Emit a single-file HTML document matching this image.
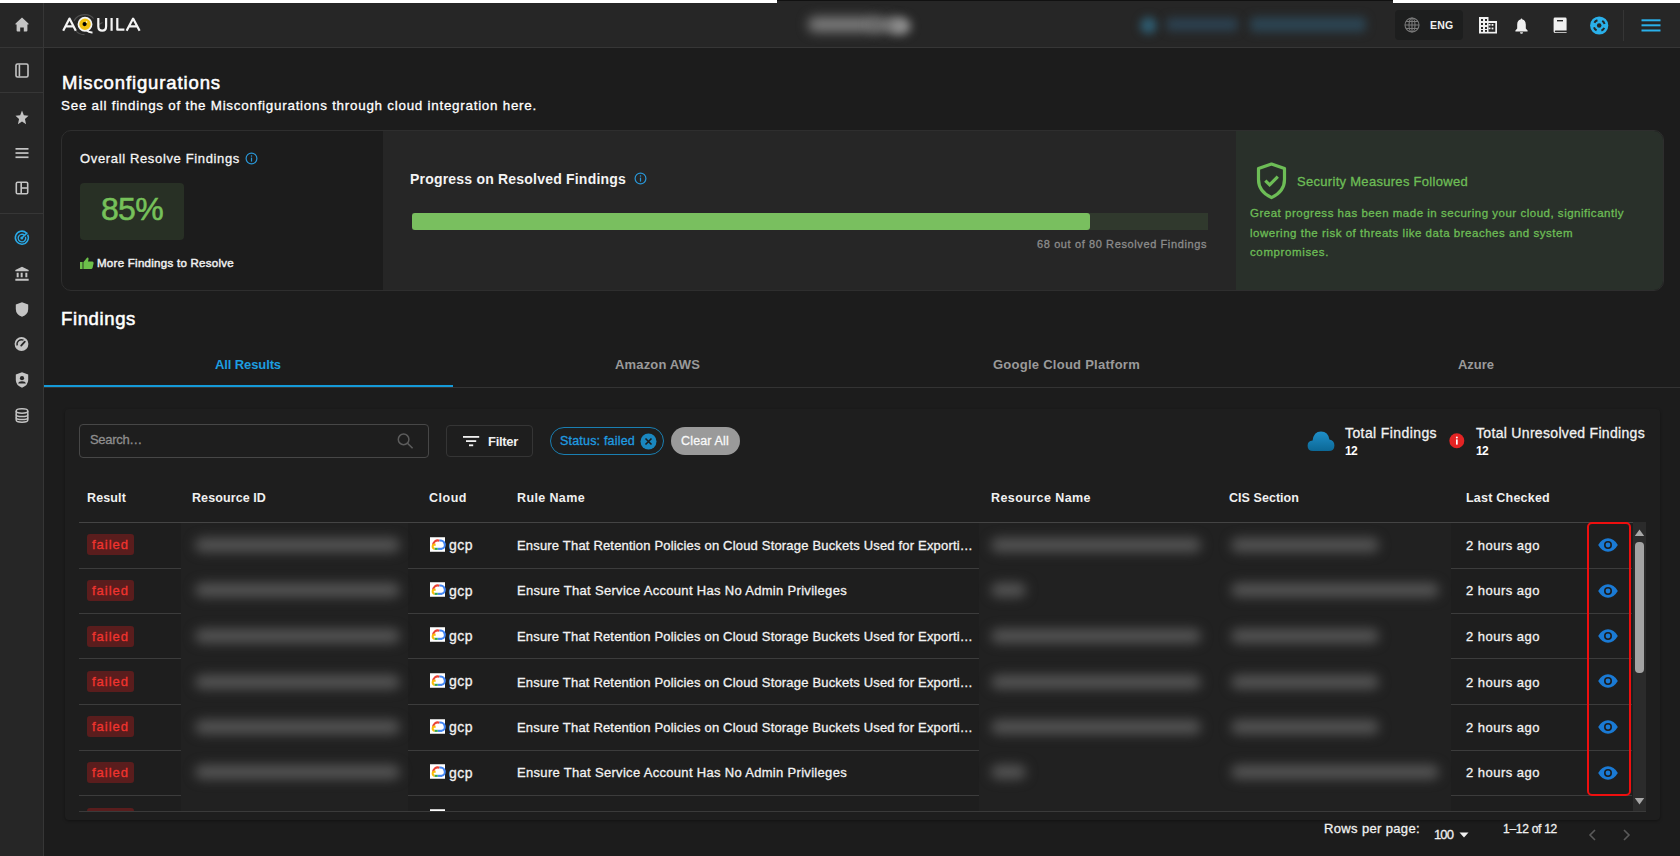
<!DOCTYPE html>
<html><head><meta charset="utf-8">
<style>
*{box-sizing:border-box;margin:0;padding:0}
html,body{width:1680px;height:856px;overflow:hidden;background:#1c1c1c;font-family:"Liberation Sans",sans-serif;color:#fff}
.a{position:absolute;white-space:nowrap;line-height:1;-webkit-text-stroke:0.3px currentColor}
.badge span{-webkit-text-stroke:0.3px currentColor}
.nb{-webkit-text-stroke:0 !important}
.a.b,.th{-webkit-text-stroke:0}
svg{position:absolute;display:block;overflow:visible}
.bx{position:absolute}
.sdiv{position:absolute;left:0;width:43px;height:1px;background:#363636}
.si{fill:#c4c4c4}
.th{font-size:12.5px;font-weight:700;color:#f0f0f0}
.td{font-size:13px;color:#f2f2f2}
.badge{position:absolute;left:87px;width:47px;height:21px;background:#5a1d1d;border-radius:3px}
.badge span{position:absolute;left:5px;top:4px;font-size:13px;color:#f0342f;white-space:nowrap;line-height:1}
.rl{position:absolute;height:1px;background:#3c3c3c}
.blur{position:absolute;background:#555;filter:blur(6px);border-radius:7px}
</style></head><body>
<!-- top strip -->
<div class="bx" style="left:0;top:0;width:777px;height:3px;background:#fff;z-index:5"></div>
<div class="bx" style="left:777px;top:0;width:616px;height:1px;background:#111;z-index:5"></div>
<div class="bx" style="left:1393px;top:0;width:287px;height:3px;background:#fff;z-index:5"></div>

<!-- sidebar -->
<div class="bx" style="left:0;top:3px;width:43px;height:853px;background:#262626"></div>
<div class="bx" style="left:43px;top:3px;width:1px;height:853px;background:#363636"></div>
<!-- topbar -->
<div class="bx" style="left:44px;top:0;width:1636px;height:47px;background:#262626"></div>
<div class="bx" style="left:0;top:47px;width:1680px;height:1px;background:#363636"></div>
<div class="sdiv" style="top:92px"></div>
<div class="sdiv" style="top:213px"></div>

<!-- sidebar icons -->
<svg style="left:15px;top:17px" width="14" height="15" viewBox="0 0 14 15"><path class="si" d="M7 0.5L0.8 6.2Q0 7 0.5 7.6L1.6 7.6L1.6 13.6Q1.6 14.6 2.6 14.6L5.2 14.6L5.2 10.4L8.8 10.4L8.8 14.6L11.4 14.6Q12.4 14.6 12.4 13.6L12.4 7.6L13.5 7.6Q14 7 13.2 6.2Z"></path></svg>
<svg style="left:15px;top:63px" width="14" height="15" viewBox="0 0 14 15"><rect x="1" y="1" width="12" height="13" rx="1.5" fill="none" stroke="#c4c4c4" stroke-width="1.6"></rect><rect x="3.6" y="1.5" width="1.6" height="12" fill="#c4c4c4"></rect></svg>
<svg style="left:14px;top:110px" width="16" height="15" viewBox="0 0 24 23"><path class="si" d="M12 18.27L18.18 22l-1.64-7.03L22 10.24l-7.19-.61L12 3 9.19 9.63 2 10.24l5.46 4.73L5.82 22z" transform="translate(0,-2.5) scale(1,1.1)"></path></svg>
<svg style="left:15px;top:147px" width="14" height="12" viewBox="0 0 14 12"><rect x="0.5" y="1" width="13" height="1.7" class="si"></rect><rect x="0.5" y="5.2" width="13" height="1.7" class="si"></rect><rect x="0.5" y="9.4" width="13" height="1.7" class="si"></rect></svg>
<svg style="left:15px;top:181px" width="14" height="14" viewBox="0 0 14 14"><rect x="1.3" y="1.3" width="11.4" height="11.4" rx="1.3" fill="none" stroke="#c4c4c4" stroke-width="1.6"></rect><rect x="5.4" y="1.5" width="1.6" height="11" fill="#c4c4c4"></rect><rect x="6.5" y="6.2" width="6" height="1.6" fill="#c4c4c4"></rect></svg>
<!-- radar (active) -->
<svg style="left:14px;top:230px" width="16" height="16" viewBox="0 0 16 16"><g fill="none" stroke="#2aa9e6"><path d="M12.6 3.2A6.5 6.5 0 1 0 13.6 4.6" stroke-width="1.5"></path><path d="M10.6 5.4A3.8 3.8 0 1 0 11.5 6.8" stroke-width="1.4"></path><path d="M7.8 8L13.4 2.6" stroke-width="1.5"></path></g><circle cx="7.8" cy="8" r="1.5" fill="#2aa9e6"></circle></svg>
<!-- bank -->
<svg style="left:14px;top:266px" width="16" height="16" viewBox="0 0 24 24"><path class="si" d="M4 10v7h3v-7H4zm6 0v7h3v-7h-3zM2 22h20v-3H2v3zm15-12v7h3v-7h-3zM12 1L2 6v2h20V6L12 1z"></path></svg>
<!-- shield -->
<svg style="left:15px;top:302px" width="14" height="15" viewBox="0 0 14 15"><path class="si" d="M7 0.3L0.8 2.6L0.8 7Q0.8 12.4 7 14.8Q13.2 12.4 13.2 7L13.2 2.6Z"></path></svg>
<!-- gauge -->
<svg style="left:14px;top:337px" width="15" height="14" viewBox="0 0 15 14"><circle cx="7.5" cy="7" r="6.9" class="si"></circle><path d="M3.2 8.5A4.5 4.5 0 0 1 9.5 3.2" fill="none" stroke="#262626" stroke-width="1.4"></path><path d="M7.2 8.6L10.8 4.6" stroke="#262626" stroke-width="1.8" stroke-linecap="round"></path></svg>
<!-- shield person -->
<svg style="left:15px;top:372px" width="14" height="16" viewBox="0 0 14 16"><path class="si" d="M7 0.3L0.8 2.4L0.8 8Q0.8 13.3 7 15.8Q13.2 13.3 13.2 8L13.2 2.4Z"></path><circle cx="7" cy="6.2" r="2.1" fill="#262626"></circle><path d="M3.2 11.6Q3.6 9.3 7 9.3Q10.4 9.3 10.8 11.6Z" fill="#262626"></path></svg>
<!-- database -->
<svg style="left:15px;top:408px" width="14" height="15" viewBox="0 0 14 15"><g fill="none" stroke="#c4c4c4" stroke-width="1.5"><ellipse cx="7" cy="3" rx="5.8" ry="2.2"></ellipse><path d="M1.2 3V12Q1.2 14.2 7 14.2Q12.8 14.2 12.8 12V3"></path><path d="M1.2 6.4Q1.2 8.6 7 8.6Q12.8 8.6 12.8 6.4"></path><path d="M1.2 9.4Q1.2 11.6 7 11.6Q12.8 11.6 12.8 9.4"></path></g></svg>

<!-- logo -->
<svg style="left:0;top:0" width="160" height="48" viewBox="0 0 160 48">
  <g fill="none" stroke="#5a5a5a" stroke-width="1.1" opacity="0.8">
    <path d="M74 21Q77 14.5 85 14.6Q91 14.8 93.5 18.5"></path>
    <path d="M75.5 30.2Q78.5 34.6 84.5 34.6"></path>
    <path d="M98.5 24.8L102.5 22.6"></path>
  </g>
  <g fill="none" stroke="#f4f4f4" stroke-width="2.2" stroke-linejoin="round">
    <path d="M63.2 30.8L69.5 18.6L75.8 30.8M65.6 26.4H73.4"></path>
    <path d="M98.3 18V26.2Q98.3 30.6 102.2 30.6Q106.1 30.6 106.1 26.2V18"></path>
    <path d="M111.6 18V30.8"></path>
    <path d="M117.3 18V29.7H124.4"></path>
    <path d="M126.6 30.8L133.1 18.6L139.6 30.8M129 26.4H137.2"></path>
  </g>
  <circle cx="85" cy="24.2" r="6.6" fill="#f2c10f" stroke="#f4f4f4" stroke-width="1.7"></circle>
  <circle cx="84.6" cy="24.1" r="2.1" fill="#000"></circle>
  <circle cx="86.6" cy="22" r="0.8" fill="#fff"></circle>
  <path d="M86.5 30.2Q89 32.6 92.5 32.4" fill="none" stroke="#f4f4f4" stroke-width="2"></path>
</svg>
<!-- blurred top center -->
<div class="bx" style="left:808px;top:17px;width:70px;height:15px;background:#7c7c7c;filter:blur(6px);border-radius:7px"></div>
<div class="bx" style="left:870px;top:18px;width:28px;height:14px;background:#7a7a7a;filter:blur(6px);border-radius:7px"></div>
<div class="bx" style="left:889px;top:17px;width:22px;height:18px;background:#8e8e8e;filter:blur(5px);border-radius:50%"></div>
<!-- blurred blue -->
<div class="bx" style="left:1140px;top:17px;width:17px;height:17px;background:#2e5a6e;filter:blur(4px);border-radius:50%"></div>
<div class="bx" style="left:1166px;top:18px;width:72px;height:13px;background:#2c4150;filter:blur(5px);border-radius:5px"></div>
<div class="bx" style="left:1250px;top:17px;width:116px;height:15px;background:#2c4452;filter:blur(5px);border-radius:5px"></div>

<!-- ENG -->
<div class="bx" style="left:1395px;top:10px;width:68px;height:30px;background:#1d1e1e;border-radius:4px"></div>
<svg style="left:1404px;top:17px" width="16" height="16" viewBox="0 0 16 16"><g fill="none" stroke="#7a7a7a" stroke-width="1.1"><circle cx="8" cy="8" r="7"></circle><ellipse cx="8" cy="8" rx="3" ry="7"></ellipse><path d="M1 8H15M2 4.5H14M2 11.5H14M8 1V15"></path></g></svg>
<div class="a b" style="left:1430px;top:20px;font-size:10.5px;font-weight:700;color:#f0f0f0;letter-spacing:0.2px">ENG</div>
<!-- building -->
<svg style="left:1479px;top:17px" width="19" height="17" viewBox="0 0 19 17"><path fill="#f0f0f0" d="M0 0H9.5V4H18V16.4H0Z"></path><g fill="#262626"><rect x="2" y="2" width="2" height="2"></rect><rect x="6" y="2" width="2" height="2"></rect><rect x="2" y="6" width="2" height="2"></rect><rect x="6" y="6" width="2" height="2"></rect><rect x="2" y="10" width="2" height="2"></rect><rect x="6" y="10" width="2" height="2"></rect><rect x="2" y="13" width="2" height="1.8"></rect><rect x="6" y="13" width="2" height="1.8"></rect><rect x="9.5" y="6" width="6.8" height="8.8"></rect></g><g fill="#f0f0f0"><rect x="9.5" y="7" width="2" height="1.6"></rect><rect x="9.5" y="10.6" width="2" height="1.6"></rect><rect x="12.6" y="7" width="1.8" height="1.8"></rect><rect x="12.6" y="10.6" width="1.8" height="1.8"></rect></g></svg>
<!-- bell -->
<svg style="left:1515px;top:18px" width="13" height="16" viewBox="0 0 13 16"><path fill="#f0f0f0" d="M6.5 0.5Q7.3 0.5 7.4 1.6Q10.8 2.4 10.8 6.6V10.6L12.6 12.6V13.4H0.4V12.6L2.2 10.6V6.6Q2.2 2.4 5.6 1.6Q5.7 0.5 6.5 0.5ZM5 14.2H8Q8 15.8 6.5 15.8Q5 15.8 5 14.2Z"></path></svg>
<!-- book -->
<svg style="left:1553px;top:17px" width="15" height="16" viewBox="0 0 15 16"><path fill="#f0f0f0" d="M2 0.6H12.2Q13.6 0.6 13.6 2V13.6H2.6Q1.8 13.6 1.8 14.4Q1.8 15.2 2.6 15.2H13.6V16H2Q0.6 16 0.6 14.6V2Q0.6 0.6 2 0.6Z"></path><rect x="4" y="3" width="6" height="1.4" fill="#262626"></rect></svg>
<!-- life ring -->
<svg style="left:1590px;top:16px" width="19" height="19" viewBox="0 0 19 19"><circle cx="9.2" cy="9.5" r="9.1" fill="#2ab0ea"></circle><circle cx="9.2" cy="9.5" r="5.6" fill="none" stroke="#262626" stroke-width="2" stroke-dasharray="3.8 5" stroke-dashoffset="-2.5"></circle><circle cx="9.2" cy="9.5" r="2.3" fill="#262626"></circle></svg>
<div class="bx" style="left:1623px;top:10px;width:1px;height:31px;background:#353535"></div>
<!-- hamburger -->
<svg style="left:1641px;top:19px" width="20" height="13" viewBox="0 0 20 13"><g fill="#2ab0ea"><rect x="0.5" y="0.3" width="19" height="2"></rect><rect x="0.5" y="5.3" width="19" height="2"></rect><rect x="0.5" y="10.5" width="19" height="2"></rect></g></svg>

<!-- page title -->
<div class="a" style="left: 62px; top: 74px; font-size: 18.5px; font-weight: 400; -webkit-text-stroke: 0.55px rgb(255, 255, 255); color: rgb(255, 255, 255); letter-spacing: 0.885px;">Misconfigurations</div>
<div class="a" style="left: 61px; top: 99px; font-size: 13.4px; color: rgb(255, 255, 255); letter-spacing: 0.749px;">See all findings of the Misconfigurations through cloud integration here.</div>

<!-- cards container -->
<div class="bx" style="left:61px;top:130px;width:1603px;height:161px;border:1px solid #2e2e2e;border-radius:10px;overflow:hidden;background:#1c1c1c">
  <div class="bx" style="left:321px;top:0;width:855px;height:161px;background:#262626"></div>
  <div class="bx" style="left:1174px;top:0;width:429px;height:161px;background:#29302a"></div>
</div>

<!-- card 1 -->
<div class="a" style="left: 80px; top: 152px; font-size: 13px; color: rgb(244, 244, 244); letter-spacing: 0.646px;">Overall Resolve Findings</div>
<svg style="left:245px;top:152px" width="13" height="13" viewBox="0 0 13 13"><circle cx="6.5" cy="6.5" r="5.4" fill="none" stroke="#2996d6" stroke-width="1.2"></circle><rect x="5.9" y="5.6" width="1.2" height="4" fill="#2996d6"></rect><circle cx="6.5" cy="3.9" r="0.75" fill="#2996d6"></circle></svg>
<div class="bx" style="left:80px;top:183px;width:104px;height:57px;background:#283025;border-radius:4px"></div>
<div class="a" style="left: 101px; top: 193px; font-size: 32px; color: rgb(118, 193, 90); -webkit-text-stroke: 0.55px rgb(118, 193, 90); letter-spacing: -0.688px;">85%</div>
<svg style="left:80px;top:257px" width="14" height="12" viewBox="0 0 14 12"><path fill="#6cc04a" d="M0 5H2.6V12H0ZM3.4 5.2L6.6 1.2Q7.2 0.2 8 0.6Q8.8 1 8.5 2.4L8 4.6H12.4Q13.8 4.8 13.6 6.2L12.6 10.8Q12.3 12 11 12H3.4Z"></path></svg>
<div class="a" style="left: 97px; top: 257.5px; font-size: 11.5px; color: rgb(240, 240, 240); -webkit-text-stroke: 0.45px rgb(240, 240, 240); letter-spacing: 0.275px;">More Findings to Resolve</div>

<!-- card 2 -->
<div class="a b" style="left: 410px; top: 172px; font-size: 14px; font-weight: 700; color: rgb(244, 244, 244); letter-spacing: 0.205px;">Progress on Resolved Findings</div>
<svg style="left:634px;top:172px" width="13" height="13" viewBox="0 0 13 13"><circle cx="6.5" cy="6.5" r="5.4" fill="none" stroke="#2996d6" stroke-width="1.2"></circle><rect x="5.9" y="5.6" width="1.2" height="4" fill="#2996d6"></rect><circle cx="6.5" cy="3.9" r="0.75" fill="#2996d6"></circle></svg>
<div class="bx" style="left:412px;top:213px;width:796px;height:17px;background:#30392d"></div>
<div class="bx" style="left:412px;top:213px;width:678px;height:17px;background:#79bf5f;border-radius:3px"></div>
<div class="a" style="left: 1037px; top: 239px; font-size: 11px; color: rgb(140, 140, 140); letter-spacing: 0.612px;">68 out of 80 Resolved Findings</div>

<!-- card 3 -->
<svg style="left:1256px;top:162px" width="31" height="38" viewBox="0 0 31 38"><path d="M15.5 2L2.5 6.6V17.5Q2.5 29.6 15.5 35.6Q28.5 29.6 28.5 17.5V6.6Z" fill="none" stroke="#6dbd56" stroke-width="3.2" stroke-linejoin="round"></path><path d="M9.3 18.6L13.6 22.8L21.8 14.6" fill="none" stroke="#6dbd56" stroke-width="3.2"></path></svg>
<div class="a" style="left: 1297px; top: 175px; font-size: 13px; color: rgb(109, 189, 86); letter-spacing: 0.297px;">Security Measures Followed</div>
<div class="a" style="left: 1250px; top: 208px; font-size: 11.5px; color: rgb(109, 189, 86); letter-spacing: 0.514px;">Great progress has been made in securing your cloud, significantly</div>
<div class="a" style="left: 1250px; top: 227.5px; font-size: 11.5px; color: rgb(109, 189, 86); letter-spacing: 0.522px;">lowering the risk of threats like data breaches and system</div>
<div class="a" style="left: 1250px; top: 247px; font-size: 11.5px; color: rgb(109, 189, 86); letter-spacing: 0.618px;">compromises.</div>

<!-- Findings -->
<div class="a" style="left: 61px; top: 310px; font-size: 18.5px; font-weight: 400; -webkit-text-stroke: 0.55px rgb(255, 255, 255); color: rgb(255, 255, 255); letter-spacing: 0.633px;">Findings</div>

<!-- tabs -->
<div class="bx" style="left:44px;top:387px;width:1636px;height:1px;background:#333"></div>
<div class="bx" style="left:44px;top:385px;width:409px;height:2px;background:#159ad8"></div>
<div class="a b" style="left: 215px; top: 358px; font-size: 13px; font-weight: 700; color: rgb(29, 158, 224); letter-spacing: -0.108px;">All Results</div>
<div class="a b" style="left: 615px; top: 358px; font-size: 13px; font-weight: 700; color: rgb(154, 154, 154); letter-spacing: 0.169px;">Amazon AWS</div>
<div class="a b" style="left: 993px; top: 358px; font-size: 13px; font-weight: 700; color: rgb(154, 154, 154); letter-spacing: 0.259px;">Google Cloud Platform</div>
<div class="a b" style="left: 1458px; top: 358px; font-size: 13px; font-weight: 700; color: rgb(154, 154, 154); letter-spacing: -0.025px;">Azure</div>


<!-- table container -->
<div class="bx" style="left:65px;top:409px;width:1595px;height:411px;background:#1e1e1e;border-radius:4px;box-shadow:0 1px 3px rgba(0,0,0,0.35)"></div>
<!-- search -->
<div class="bx" style="left:79px;top:424px;width:350px;height:34px;border:1px solid #474747;border-radius:4px"></div>
<div class="a" style="left: 90px; top: 433px; font-size: 13px; color: rgb(142, 142, 142); letter-spacing: -0.315px;">Search…</div>
<svg style="left:397px;top:433px" width="17" height="16" viewBox="0 0 17 16"><circle cx="6.6" cy="6.4" r="5.3" fill="none" stroke="#5c5c5c" stroke-width="1.5"></circle><path d="M10.5 10.2L15.6 15.2" stroke="#5c5c5c" stroke-width="1.6"></path></svg>
<!-- filter -->
<div class="bx" style="left:446px;top:425px;width:87px;height:32px;border:1px solid #353535;border-radius:4px"></div>
<svg style="left:463px;top:436px" width="17" height="11" viewBox="0 0 17 11"><g fill="#f0f0f0"><rect x="0" y="0" width="16.2" height="1.8"></rect><rect x="3" y="4.2" width="10.2" height="1.8"></rect><rect x="6" y="8.4" width="4.2" height="1.8"></rect></g></svg>
<div class="a b" style="left: 488px; top: 435px; font-size: 13px; font-weight: 700; color: rgb(240, 240, 240); letter-spacing: -0.299px;">Filter</div>
<!-- status chip -->
<div class="bx" style="left:550px;top:427px;width:114px;height:28px;border:1.3px solid #1a7fb2;border-radius:14px"></div>
<div class="a" style="left: 560px; top: 435px; font-size: 12.5px; color: rgb(31, 156, 224); letter-spacing: 0.195px;">Status: failed</div>
<svg style="left:640px;top:433px" width="17" height="17" viewBox="0 0 17 17"><circle cx="8.5" cy="8.5" r="8" fill="#1a87c0"></circle><path d="M5.5 5.5L11.5 11.5M11.5 5.5L5.5 11.5" stroke="#1c1c1c" stroke-width="1.6"></path></svg>
<!-- clear all -->
<div class="bx" style="left:671px;top:427px;width:69px;height:28px;background:#9a9a9a;border-radius:14px"></div>
<div class="a" style="left: 681px; top: 435px; font-size: 12.5px; color: rgb(248, 248, 248); letter-spacing: 0.161px;">Clear All</div>
<!-- totals -->
<svg style="left:1307px;top:431px" width="28" height="20" viewBox="0 0 28 20"><defs><linearGradient id="cg" x1="0" y1="0" x2="0" y2="1"><stop offset="0" stop-color="#1f8fc9"></stop><stop offset="1" stop-color="#0c6896"></stop></linearGradient></defs><path fill="url(#cg)" d="M6 20Q0.6 20 0.6 14.8Q0.6 10 5.6 9.6Q6.6 0.4 14 0.4Q21.2 0.4 22.4 8.4Q27.4 9.4 27.4 14.4Q27.4 20 21.6 20Z"></path></svg>
<div class="a" style="left: 1345px; top: 426px; font-size: 14px; color: rgb(242, 242, 242); letter-spacing: 0.401px;">Total Findings</div>
<div class="a b" style="left: 1345px; top: 445px; font-size: 12px; font-weight: 700; color: rgb(255, 255, 255); letter-spacing: -0.68px;">12</div>
<svg style="left:1449px;top:433px" width="16" height="16" viewBox="0 0 16 16"><circle cx="7.8" cy="7.8" r="7.5" fill="#e42424"></circle><rect x="7" y="6.4" width="1.7" height="5.2" fill="#fff"></rect><circle cx="7.85" cy="4.4" r="1" fill="#fff"></circle></svg>
<div class="a" style="left: 1476px; top: 426px; font-size: 14px; color: rgb(242, 242, 242); letter-spacing: 0.317px;">Total Unresolved Findings</div>
<div class="a b" style="left: 1476px; top: 445px; font-size: 12px; font-weight: 700; color: rgb(255, 255, 255); letter-spacing: -0.68px;">12</div>
<!-- header -->
<div class="a th" style="left: 87px; top: 492px; letter-spacing: 0.133px;">Result</div>
<div class="a th" style="left: 192px; top: 492px; letter-spacing: 0.095px;">Resource ID</div>
<div class="a th" style="left: 429px; top: 492px; letter-spacing: 0.516px;">Cloud</div>
<div class="a th" style="left: 517px; top: 492px; letter-spacing: 0.377px;">Rule Name</div>
<div class="a th" style="left: 991px; top: 492px; letter-spacing: 0.423px;">Resource Name</div>
<div class="a th" style="left: 1229px; top: 492px; letter-spacing: 0.048px;">CIS Section</div>
<div class="a th" style="left: 1466px; top: 492px; letter-spacing: 0.225px;">Last Checked</div>
<div class="rl" style="left:79px;top:522px;width:1567px;background:#444"></div>
<!-- table body clip -->
<div class="bx" style="left:65px;top:523px;width:1580px;height:288px;overflow:hidden">

<div class="rl" style="left:14px;top:45px;width:102px"></div>
<div class="rl" style="left:343px;top:45px;width:571px"></div>
<div class="rl" style="left:1386px;top:45px;width:181px"></div>
<div class="badge" style="left:22px;top:11px"><span style="letter-spacing: 0.984px;">failed</span></div>
<svg style="left:365px;top:14px" width="15" height="15" viewBox="0 0 15.5 15"><rect width="15.5" height="15" fill="#fff"></rect><g fill="none" stroke-width="2.2"><path d="M3.4 8.4A4.6 4.6 0 0 1 9.8 3.6" stroke="#ea4335"></path><path d="M9.8 3.6A4.4 4.4 0 0 1 12.4 12" stroke="#4285f4"></path><path d="M8 12H12.4" stroke="#4285f4"></path><path d="M4.6 12H8" stroke="#34a853"></path><path d="M4.6 12A2.4 2.4 0 0 1 3.6 7.8L5.8 7.6" stroke="#fbbc05"></path></g></svg>
<div class="a td" style="left: 384px; top: 15px; font-size: 14px; letter-spacing: 0.474px;">gcp</div>
<div class="a td" style="left: 452px; top: 16px; letter-spacing: 0.182px;">Ensure That Retention Policies on Cloud Storage Buckets Used for Exporti…</div>
<div class="a td" style="left: 1401px; top: 16px; letter-spacing: 0.484px;">2 hours ago</div>
<svg style="left:1533px;top:15px" width="20" height="14" viewBox="0 0 20 14"><path fill="#1a7ad4" d="M10 0.3Q4 0.3 0.2 7Q4 13.7 10 13.7Q16 13.7 19.8 7Q16 0.3 10 0.3Z"></path><circle cx="10" cy="7" r="4" fill="#1c1c1c"></circle><circle cx="10" cy="7" r="2.4" fill="#1a7ad4"></circle></svg>
<div class="rl" style="left:14px;top:90px;width:102px"></div>
<div class="rl" style="left:343px;top:90px;width:571px"></div>
<div class="rl" style="left:1386px;top:90px;width:181px"></div>
<div class="badge" style="left:22px;top:57px"><span style="letter-spacing: 0.984px;">failed</span></div>
<svg style="left:365px;top:59px" width="15" height="15" viewBox="0 0 15.5 15"><rect width="15.5" height="15" fill="#fff"></rect><g fill="none" stroke-width="2.2"><path d="M3.4 8.4A4.6 4.6 0 0 1 9.8 3.6" stroke="#ea4335"></path><path d="M9.8 3.6A4.4 4.4 0 0 1 12.4 12" stroke="#4285f4"></path><path d="M8 12H12.4" stroke="#4285f4"></path><path d="M4.6 12H8" stroke="#34a853"></path><path d="M4.6 12A2.4 2.4 0 0 1 3.6 7.8L5.8 7.6" stroke="#fbbc05"></path></g></svg>
<div class="a td" style="left: 384px; top: 61px; font-size: 14px; letter-spacing: 0.474px;">gcp</div>
<div class="a td" style="left: 452px; top: 61px; letter-spacing: 0.312px;">Ensure That Service Account Has No Admin Privileges</div>
<div class="a td" style="left: 1401px; top: 61px; letter-spacing: 0.484px;">2 hours ago</div>
<svg style="left:1533px;top:61px" width="20" height="14" viewBox="0 0 20 14"><path fill="#1a7ad4" d="M10 0.3Q4 0.3 0.2 7Q4 13.7 10 13.7Q16 13.7 19.8 7Q16 0.3 10 0.3Z"></path><circle cx="10" cy="7" r="4" fill="#1c1c1c"></circle><circle cx="10" cy="7" r="2.4" fill="#1a7ad4"></circle></svg>
<div class="rl" style="left:14px;top:135px;width:102px"></div>
<div class="rl" style="left:343px;top:135px;width:571px"></div>
<div class="rl" style="left:1386px;top:135px;width:181px"></div>
<div class="badge" style="left:22px;top:103px"><span style="letter-spacing: 0.984px;">failed</span></div>
<svg style="left:365px;top:104px" width="15" height="15" viewBox="0 0 15.5 15"><rect width="15.5" height="15" fill="#fff"></rect><g fill="none" stroke-width="2.2"><path d="M3.4 8.4A4.6 4.6 0 0 1 9.8 3.6" stroke="#ea4335"></path><path d="M9.8 3.6A4.4 4.4 0 0 1 12.4 12" stroke="#4285f4"></path><path d="M8 12H12.4" stroke="#4285f4"></path><path d="M4.6 12H8" stroke="#34a853"></path><path d="M4.6 12A2.4 2.4 0 0 1 3.6 7.8L5.8 7.6" stroke="#fbbc05"></path></g></svg>
<div class="a td" style="left: 384px; top: 106px; font-size: 14px; letter-spacing: 0.474px;">gcp</div>
<div class="a td" style="left: 452px; top: 107px; letter-spacing: 0.182px;">Ensure That Retention Policies on Cloud Storage Buckets Used for Exporti…</div>
<div class="a td" style="left: 1401px; top: 107px; letter-spacing: 0.484px;">2 hours ago</div>
<svg style="left:1533px;top:106px" width="20" height="14" viewBox="0 0 20 14"><path fill="#1a7ad4" d="M10 0.3Q4 0.3 0.2 7Q4 13.7 10 13.7Q16 13.7 19.8 7Q16 0.3 10 0.3Z"></path><circle cx="10" cy="7" r="4" fill="#1c1c1c"></circle><circle cx="10" cy="7" r="2.4" fill="#1a7ad4"></circle></svg>
<div class="rl" style="left:14px;top:181px;width:102px"></div>
<div class="rl" style="left:343px;top:181px;width:571px"></div>
<div class="rl" style="left:1386px;top:181px;width:181px"></div>
<div class="badge" style="left:22px;top:148px"><span style="letter-spacing: 0.984px;">failed</span></div>
<svg style="left:365px;top:150px" width="15" height="15" viewBox="0 0 15.5 15"><rect width="15.5" height="15" fill="#fff"></rect><g fill="none" stroke-width="2.2"><path d="M3.4 8.4A4.6 4.6 0 0 1 9.8 3.6" stroke="#ea4335"></path><path d="M9.8 3.6A4.4 4.4 0 0 1 12.4 12" stroke="#4285f4"></path><path d="M8 12H12.4" stroke="#4285f4"></path><path d="M4.6 12H8" stroke="#34a853"></path><path d="M4.6 12A2.4 2.4 0 0 1 3.6 7.8L5.8 7.6" stroke="#fbbc05"></path></g></svg>
<div class="a td" style="left: 384px; top: 151px; font-size: 14px; letter-spacing: 0.474px;">gcp</div>
<div class="a td" style="left: 452px; top: 153px; letter-spacing: 0.182px;">Ensure That Retention Policies on Cloud Storage Buckets Used for Exporti…</div>
<div class="a td" style="left: 1401px; top: 153px; letter-spacing: 0.484px;">2 hours ago</div>
<svg style="left:1533px;top:151px" width="20" height="14" viewBox="0 0 20 14"><path fill="#1a7ad4" d="M10 0.3Q4 0.3 0.2 7Q4 13.7 10 13.7Q16 13.7 19.8 7Q16 0.3 10 0.3Z"></path><circle cx="10" cy="7" r="4" fill="#1c1c1c"></circle><circle cx="10" cy="7" r="2.4" fill="#1a7ad4"></circle></svg>
<div class="rl" style="left:14px;top:227px;width:102px"></div>
<div class="rl" style="left:343px;top:227px;width:571px"></div>
<div class="rl" style="left:1386px;top:227px;width:181px"></div>
<div class="badge" style="left:22px;top:193px"><span style="letter-spacing: 0.984px;">failed</span></div>
<svg style="left:365px;top:196px" width="15" height="15" viewBox="0 0 15.5 15"><rect width="15.5" height="15" fill="#fff"></rect><g fill="none" stroke-width="2.2"><path d="M3.4 8.4A4.6 4.6 0 0 1 9.8 3.6" stroke="#ea4335"></path><path d="M9.8 3.6A4.4 4.4 0 0 1 12.4 12" stroke="#4285f4"></path><path d="M8 12H12.4" stroke="#4285f4"></path><path d="M4.6 12H8" stroke="#34a853"></path><path d="M4.6 12A2.4 2.4 0 0 1 3.6 7.8L5.8 7.6" stroke="#fbbc05"></path></g></svg>
<div class="a td" style="left: 384px; top: 197px; font-size: 14px; letter-spacing: 0.474px;">gcp</div>
<div class="a td" style="left: 452px; top: 198px; letter-spacing: 0.182px;">Ensure That Retention Policies on Cloud Storage Buckets Used for Exporti…</div>
<div class="a td" style="left: 1401px; top: 198px; letter-spacing: 0.484px;">2 hours ago</div>
<svg style="left:1533px;top:197px" width="20" height="14" viewBox="0 0 20 14"><path fill="#1a7ad4" d="M10 0.3Q4 0.3 0.2 7Q4 13.7 10 13.7Q16 13.7 19.8 7Q16 0.3 10 0.3Z"></path><circle cx="10" cy="7" r="4" fill="#1c1c1c"></circle><circle cx="10" cy="7" r="2.4" fill="#1a7ad4"></circle></svg>
<div class="rl" style="left:14px;top:272px;width:102px"></div>
<div class="rl" style="left:343px;top:272px;width:571px"></div>
<div class="rl" style="left:1386px;top:272px;width:181px"></div>
<div class="badge" style="left:22px;top:239px"><span style="letter-spacing: 0.984px;">failed</span></div>
<svg style="left:365px;top:241px" width="15" height="15" viewBox="0 0 15.5 15"><rect width="15.5" height="15" fill="#fff"></rect><g fill="none" stroke-width="2.2"><path d="M3.4 8.4A4.6 4.6 0 0 1 9.8 3.6" stroke="#ea4335"></path><path d="M9.8 3.6A4.4 4.4 0 0 1 12.4 12" stroke="#4285f4"></path><path d="M8 12H12.4" stroke="#4285f4"></path><path d="M4.6 12H8" stroke="#34a853"></path><path d="M4.6 12A2.4 2.4 0 0 1 3.6 7.8L5.8 7.6" stroke="#fbbc05"></path></g></svg>
<div class="a td" style="left: 384px; top: 243px; font-size: 14px; letter-spacing: 0.474px;">gcp</div>
<div class="a td" style="left: 452px; top: 243px; letter-spacing: 0.312px;">Ensure That Service Account Has No Admin Privileges</div>
<div class="a td" style="left: 1401px; top: 243px; letter-spacing: 0.484px;">2 hours ago</div>
<svg style="left:1533px;top:243px" width="20" height="14" viewBox="0 0 20 14"><path fill="#1a7ad4" d="M10 0.3Q4 0.3 0.2 7Q4 13.7 10 13.7Q16 13.7 19.8 7Q16 0.3 10 0.3Z"></path><circle cx="10" cy="7" r="4" fill="#1c1c1c"></circle><circle cx="10" cy="7" r="2.4" fill="#1a7ad4"></circle></svg>
<div class="rl" style="left:14px;top:317px;width:102px"></div>
<div class="rl" style="left:343px;top:317px;width:571px"></div>
<div class="rl" style="left:1386px;top:317px;width:181px"></div>
<div class="badge" style="left:22px;top:285px"><span style="letter-spacing: 0.984px;">failed</span></div>
<svg style="left:365px;top:286px" width="15" height="15" viewBox="0 0 15.5 15"><rect width="15.5" height="15" fill="#fff"></rect><g fill="none" stroke-width="2.2"><path d="M3.4 8.4A4.6 4.6 0 0 1 9.8 3.6" stroke="#ea4335"></path><path d="M9.8 3.6A4.4 4.4 0 0 1 12.4 12" stroke="#4285f4"></path><path d="M8 12H12.4" stroke="#4285f4"></path><path d="M4.6 12H8" stroke="#34a853"></path><path d="M4.6 12A2.4 2.4 0 0 1 3.6 7.8L5.8 7.6" stroke="#fbbc05"></path></g></svg>
<div class="a td" style="left: 384px; top: 288px; font-size: 14px; letter-spacing: 0.474px;">gcp</div>
<div class="a td" style="left: 452px; top: 289px; letter-spacing: 0.312px;">Ensure That Service Account Has No Admin Privileges</div>
<div class="a td" style="left: 1401px; top: 289px; letter-spacing: 0.484px;">2 hours ago</div>
<svg style="left:1533px;top:288px" width="20" height="14" viewBox="0 0 20 14"><path fill="#1a7ad4" d="M10 0.3Q4 0.3 0.2 7Q4 13.7 10 13.7Q16 13.7 19.8 7Q16 0.3 10 0.3Z"></path><circle cx="10" cy="7" r="4" fill="#1c1c1c"></circle><circle cx="10" cy="7" r="2.4" fill="#1a7ad4"></circle></svg>
<div class="bx" style="left:116px;top:0;width:227px;height:288px;background:#212121"></div>
<div class="bx" style="left:914px;top:0;width:472px;height:288px;background:#212121"></div>
<div class="blur" style="left:130px;top:15px;width:205px;height:14px"></div>
<div class="blur" style="left:926px;top:15px;width:210px;height:14px"></div>
<div class="blur" style="left:1166px;top:15px;width:148px;height:14px"></div>
<div class="blur" style="left:130px;top:60px;width:205px;height:14px"></div>
<div class="blur" style="left:926px;top:60px;width:35px;height:14px"></div>
<div class="blur" style="left:1166px;top:60px;width:208px;height:14px"></div>
<div class="blur" style="left:130px;top:106px;width:205px;height:14px"></div>
<div class="blur" style="left:926px;top:106px;width:210px;height:14px"></div>
<div class="blur" style="left:1166px;top:106px;width:148px;height:14px"></div>
<div class="blur" style="left:130px;top:152px;width:205px;height:14px"></div>
<div class="blur" style="left:926px;top:152px;width:210px;height:14px"></div>
<div class="blur" style="left:1166px;top:152px;width:148px;height:14px"></div>
<div class="blur" style="left:130px;top:197px;width:205px;height:14px"></div>
<div class="blur" style="left:926px;top:197px;width:210px;height:14px"></div>
<div class="blur" style="left:1166px;top:197px;width:148px;height:14px"></div>
<div class="blur" style="left:130px;top:242px;width:205px;height:14px"></div>
<div class="blur" style="left:926px;top:242px;width:35px;height:14px"></div>
<div class="blur" style="left:1166px;top:242px;width:208px;height:14px"></div>
</div>

<!-- red box -->
<div class="bx" style="left:1587px;top:522px;width:44px;height:274px;border:2px solid #ee0f0f;border-radius:5px"></div>
<!-- scrollbar -->
<div class="bx" style="left:1633px;top:522px;width:13px;height:289px;background:#2b2b2b"></div>
<svg style="left:1634px;top:529px" width="11" height="8" viewBox="0 0 11 8"><path d="M5.5 0.5L10.2 7H0.8Z" fill="#a8a8a8"></path></svg>
<div class="bx" style="left:1635px;top:542px;width:8.5px;height:131px;background:#a3a3a3;border-radius:4px"></div>
<svg style="left:1634px;top:797px" width="11" height="8" viewBox="0 0 11 8"><path d="M5.5 7.5L10.2 1H0.8Z" fill="#a8a8a8"></path></svg>
<div class="rl" style="left:79px;top:811px;width:1567px;background:#3a3a3a"></div>
<!-- footer -->
<div class="a" style="left: 1324px; top: 822px; font-size: 13px; color: rgb(240, 240, 240); letter-spacing: 0.353px;">Rows per page:</div>
<div class="a" style="left: 1434px; top: 828px; font-size: 13px; color: rgb(240, 240, 240); letter-spacing: -0.901px;">100</div>
<svg style="left:1459px;top:832px" width="10" height="6" viewBox="0 0 10 6"><path d="M0.5 0.5H9.5L5 5.5Z" fill="#f0f0f0"></path></svg>
<div class="a" style="left: 1503px; top: 823px; font-size: 12px; color: rgb(240, 240, 240); letter-spacing: -0.272px;">1–12 of 12</div>
<svg style="left:1587px;top:829px" width="10" height="12" viewBox="0 0 10 12"><path d="M8 1L3 6L8 11" fill="none" stroke="#5a5a5a" stroke-width="1.6"></path></svg>
<svg style="left:1622px;top:829px" width="10" height="12" viewBox="0 0 10 12"><path d="M2 1L7 6L2 11" fill="none" stroke="#5a5a5a" stroke-width="1.6"></path></svg>


</body></html>
